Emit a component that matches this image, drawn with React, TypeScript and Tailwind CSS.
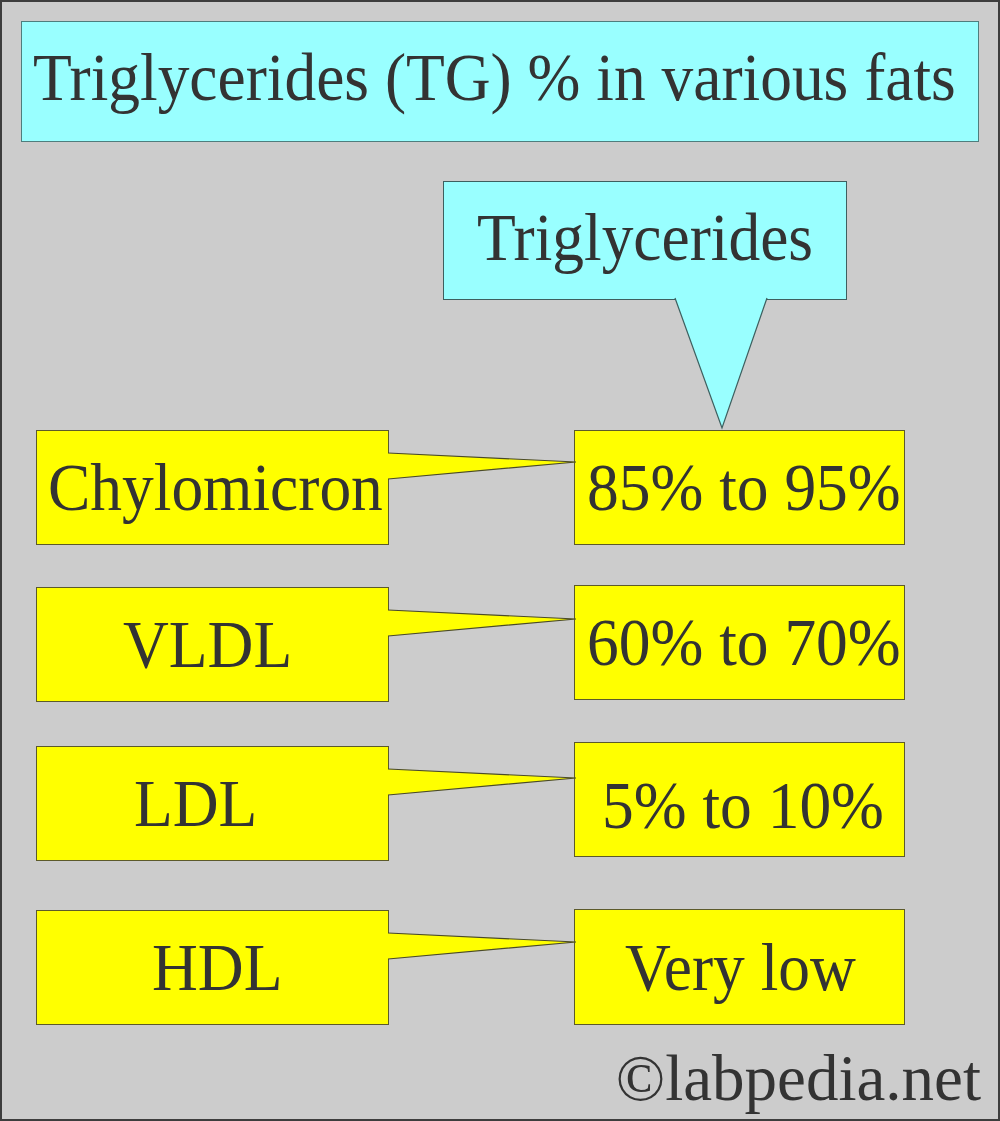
import React from "react";

const serif = { fontFamily: '"Liberation Serif", "Times New Roman", serif' };

function RowPointer() {
  return (
    <svg
      className="absolute left-full top-0 overflow-visible"
      width="190"
      height="60"
      viewBox="0 0 190 60"
    >
      <polygon points="0,22 188,31 0,48" fill="#ffff00" />
      <polyline points="0,22 188,31 0,48" fill="none" stroke="#4a4a2a" strokeWidth="1.2" />
    </svg>
  );
}

function TgPointer() {
  return (
    <svg
      className="absolute top-full left-[231px] overflow-visible"
      width="93"
      height="132"
      viewBox="0 0 93 132"
    >
      <polygon points="0,-1 47,129 92,-1" fill="#99ffff" />
      <polyline points="0,-1 47,129 92,-1" fill="none" stroke="#3e5f5f" strokeWidth="1.2" />
    </svg>
  );
}

const rows = [
  { left: "Chylomicron", right: "85% to 95%" },
  { left: "VLDL", right: "60% to 70%" },
  { left: "LDL", right: "5% to 10%" },
  { left: "HDL", right: "Very low" },
];

const txt = "inline-block text-[67px] leading-[71px] whitespace-nowrap scale-x-[0.947] origin-left";

export default function App() {
  return (
    <div
      className="w-[1000px] h-[1121px] box-border border-2 border-[#3d3d3d] bg-[#cccccc] text-[#333333] flex flex-col overflow-hidden"
      style={serif}
    >
      {/* Title */}
      <div className="mt-[19px] ml-[19px] w-[958px] h-[121px] shrink-0 box-border border border-[#4f7d7d] bg-[#99ffff] flex items-center pl-[11px] pb-[9px]">
        <span className={txt}>Triglycerides (TG) % in various fats</span>
      </div>

      {/* Triglycerides callout */}
      <div className="relative mt-[39px] ml-[441px] w-[404px] h-[119px] shrink-0 box-border border border-[#3e5f5f] bg-[#99ffff] flex items-center pl-[33px] pb-[7px]">
        <span className={txt}>Triglycerides</span>
        <TgPointer />
      </div>

      {/* Row 1 */}
      <div className="mt-[130px] h-[115px] shrink-0 flex items-start">
        <div className="relative ml-[34px] w-[353px] h-[115px] box-border border border-[#5c5a2a] bg-[#ffff00] flex items-center pl-[11px]">
          <span className={txt}>{rows[0].left}</span>
          <RowPointer />
        </div>
        <div className="ml-[185px] w-[331px] h-[115px] box-border border border-[#5c5a2a] bg-[#ffff00] flex items-center pl-[12px]">
          <span className={txt}>{rows[0].right}</span>
        </div>
      </div>

      {/* Row 2 */}
      <div className="mt-[40px] h-[117px] shrink-0 flex items-start">
        <div className="relative mt-[2px] ml-[34px] w-[353px] h-[115px] box-border border border-[#5c5a2a] bg-[#ffff00] flex items-center pl-[86px]">
          <span className={txt}>{rows[1].left}</span>
          <RowPointer />
        </div>
        <div className="ml-[185px] w-[331px] h-[115px] box-border border border-[#5c5a2a] bg-[#ffff00] flex items-center pl-[12px]">
          <span className={txt}>{rows[1].right}</span>
        </div>
      </div>

      {/* Row 3 */}
      <div className="mt-[40px] h-[119px] shrink-0 flex items-start">
        <div className="relative mt-[4px] ml-[34px] w-[353px] h-[115px] box-border border border-[#5c5a2a] bg-[#ffff00] flex items-center pl-[97px]">
          <span className={txt}>{rows[2].left}</span>
          <RowPointer />
        </div>
        <div className="ml-[185px] w-[331px] h-[115px] box-border border border-[#5c5a2a] bg-[#ffff00] flex items-center pl-[27px] pt-[12px]">
          <span className={txt}>{rows[2].right}</span>
        </div>
      </div>

      {/* Row 4 */}
      <div className="mt-[48px] h-[116px] shrink-0 flex items-start">
        <div className="relative mt-[1px] ml-[34px] w-[353px] h-[115px] box-border border border-[#5c5a2a] bg-[#ffff00] flex items-center pl-[115px]">
          <span className={txt}>{rows[3].left}</span>
          <RowPointer />
        </div>
        <div className="ml-[185px] w-[331px] h-[116px] box-border border border-[#5c5a2a] bg-[#ffff00] flex items-center pl-[50px]">
          <span className={txt}>{rows[3].right}</span>
        </div>
      </div>

      {/* Copyright */}
      <div className="mt-[17px] flex justify-end pr-[17px]">
        <span className="text-[65px] leading-[72px] whitespace-nowrap">©labpedia.net</span>
      </div>
    </div>
  );
}
